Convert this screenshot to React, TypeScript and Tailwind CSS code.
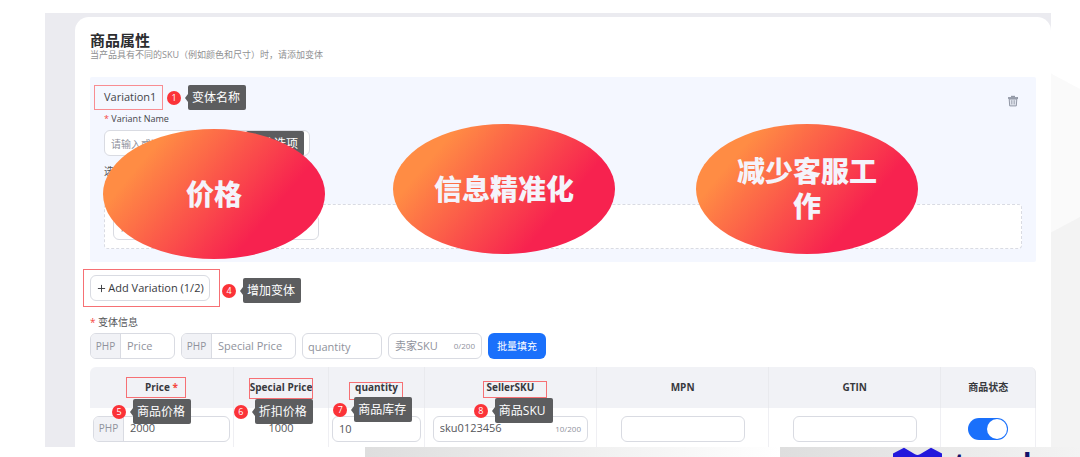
import type { ReactNode } from "react";
import { Plus } from "lucide-react";

const field =
  "h-[26px] rounded-md border border-[#d9dbe2] bg-white text-[11px] text-[#55565a] placeholder:text-[#8f929c] outline-none";

function Note({ n, text, className = "" }: { n?: number; text: string; className?: string }) {
  return (
    <div className={`absolute z-10 flex items-center gap-[7px] ${className}`}>
      {n !== undefined && (
        <span className="flex size-[14px] items-center justify-center rounded-full bg-[#fb3338] text-[9px] leading-none text-white">
          {n}
        </span>
      )}
      <span className="relative flex h-[25px] w-[58px] items-center whitespace-nowrap rounded-xs bg-[#5c5d5f] pl-1 text-xs text-white">
        {n !== undefined && (
          <span className="absolute -left-[3px] top-1/2 size-0 -translate-y-1/2 border-y-[4px] border-r-[3px] border-y-transparent border-r-[#5c5d5f]" />
        )}
        {text}
      </span>
    </div>
  );
}

function PrefixInput({ label, placeholder, value, className }: { label: string; placeholder?: string; value?: string; className: string }) {
  return (
    <label className={`flex overflow-hidden ${field} ${className}`}>
      <span className="flex w-[30px] shrink-0 items-center justify-center border-r border-[#d9dbe2] bg-[#f1f2f6] text-[10px] text-[#8f929c]">
        PHP
      </span>
      <input aria-label={label} placeholder={placeholder} defaultValue={value} className="w-full min-w-0 px-1.5 outline-none placeholder:text-[#8f929c]" />
    </label>
  );
}

function CountInput({ label, placeholder, value, count, className }: { label: string; placeholder?: string; value?: string; count: string; className: string }) {
  return (
    <label className={`flex items-center px-1.5 ${field} ${className}`}>
      <input aria-label={label} placeholder={placeholder} defaultValue={value} className="w-full min-w-0 outline-none placeholder:text-[#8f929c]" />
      <span className="shrink-0 text-[8px] text-[#8f929c]">{count}</span>
    </label>
  );
}

function Bubble({ children, className }: { children: ReactNode; className: string }) {
  return (
    <div
      className={`absolute z-20 flex h-[130px] w-[222px] items-center justify-center rounded-[50%] bg-[linear-gradient(130deg,#ff8c44_20%,#f7224f_72%)] px-[38px] text-center text-[28px] font-black leading-[35px] text-[#f4f3fb] ${className}`}
    >
      {children}
    </div>
  );
}

function Trash() {
  return (
    <svg viewBox="0 0 10 12" className="h-3 w-[10px]" fill="none" stroke="#9298a6">
      <path d="M1.2 4h7.6l-.5 6.9H1.7z" fill="#e3e7f0" />
      <path d="M0 3h10" strokeWidth="1.8" />
      <path d="M3 1.5h4" strokeWidth="1.4" />
      <path d="M3.8 5.2v4.2M6.2 5.2v4.2" strokeWidth=".9" />
    </svg>
  );
}

function Th({ text, box, required, children }: { text: string; box?: string; required?: boolean; children?: ReactNode }) {
  return (
    <th className="relative border-r border-[#e9eaee] p-0 text-[10px] font-bold text-[#38393d]">
      {box && <span className={`absolute border border-[#f67074] ${box}`} />}
      {text}
      {required && <span className="text-[#f5473f]"> *</span>}
      {children}
    </th>
  );
}

export default function App() {
  return (
    <div className="relative h-screen overflow-hidden bg-white pt-[13px] font-['Open_Sans','Noto_Sans_CJK_SC',sans-serif]">
      <svg className="absolute right-0 top-0 h-full w-[30px]" viewBox="0 0 30 457" preserveAspectRatio="none">
        <path d="M0 73L30 89V457H0z" fill="#fafafa" />
        <path d="M0 233L30 217V457H0z" fill="#f3f3f3" />
      </svg>

      <main className="relative ml-[45px] mr-[29px] h-[434px] overflow-hidden bg-[#ebebf0] pl-[30px] pt-1">
        <section className="h-full rounded-t-[14px] bg-white px-[15px] pt-[14px]">
          <h1 className="text-[15px] font-bold leading-[18px] text-[#2c2d2f]">商品属性</h1>
          <p className="text-[9px] leading-3 text-[#8f9092]">当产品具有不同的SKU（例如颜色和尺寸）时，请添加变体</p>

          <div className="relative mt-4 h-[185px] rounded-xs bg-[#f4f7ff] px-[14px] pt-2">
            <div className="flex items-center justify-between">
              <h2 className="relative -ml-[10px] flex h-[25px] w-[69px] items-center border border-[#f88d92] pl-[9px] text-[11px] text-[#444549]">
                Variation1
                <Note n={1} text="变体名称" className="left-[72px]" />
              </h2>
              <button aria-label="Delete variation" className="mr-1 mt-[6px]"><Trash /></button>
            </div>
            <label htmlFor="variant" className="mt-[3px] block text-[9px] leading-3 text-[#444549]">
              <span className="text-[#f5473f]">* </span>Variant Name
            </label>
            <div className="relative mt-[5px] w-[206px]">
              <input id="variant" placeholder="请输入或选择" className={`block w-full px-1.5 ${field} placeholder:text-[10px]`} />
              <Note text="变体选项" className="right-[6px] top-px" />
            </div>
            <p className="mt-[9px] text-[10px] leading-3 text-[#55565a]">选项</p>
            <div className="mt-[27px] flex h-[45px] items-center rounded border border-dashed border-[#d9dbe3] bg-white px-2">
              <input aria-label="Option" placeholder="请输入" className={`w-[206px] px-1.5 ${field} placeholder:text-[10px]`} />
            </div>
            <Bubble className="left-[13px] top-[52px]">价格</Bubble>
            <Bubble className="left-[303px] top-[47px]">信息精准化</Bubble>
            <Bubble className="left-[606px] top-[47px]">减少客服工作</Bubble>
          </div>

          <div className="relative -ml-[7px] mt-[7px] flex h-[38px] w-[137px] items-center border border-[#f67074] pl-[6px]">
            <button className="flex h-[26px] w-[120px] items-center justify-center gap-px rounded-md border border-[#d9dbe2] text-[11px] text-[#38393d]">
              <Plus size={11} />
              Add Variation (1/2)
            </button>
            <Note n={4} text="增加变体" className="left-[138px] top-[8px]" />
          </div>

          <p className="mt-[9px] text-[10px] leading-3 text-[#55565a]">
            <span className="text-[#f5473f]">* </span>变体信息
          </p>
          <div className="mt-[5px] flex gap-1.5">
            <PrefixInput label="Price" placeholder="Price" className="w-[85px]" />
            <PrefixInput label="Special Price" placeholder="Special Price" className="w-[115px]" />
            <input aria-label="quantity" placeholder="quantity" className={`w-[80px] px-[5px] ${field}`} />
            <CountInput label="卖家SKU" placeholder="卖家SKU" count="0/200" className="w-[94px]" />
            <button className="h-[26px] w-[58px] rounded-md bg-[#1a70fb] text-[10px] text-white">批量填充</button>
          </div>

          <table className="mt-2 w-full table-fixed border-separate border-spacing-0">
            <colgroup>
              <col className="w-[15.2%]" />
              <col className="w-[10.1%]" />
              <col className="w-[10.1%]" />
              <col className="w-[18.2%]" />
              <col className="w-[18.2%]" />
              <col className="w-[18.2%]" />
              <col className="w-[10%]" />
            </colgroup>
            <thead>
              <tr className="h-[41px] bg-[#f1f2f6] *:first:rounded-tl-md *:last:rounded-tr-md">
                <Th text="Price" required box="left-[36px] top-[10px] h-[21px] w-[60px]">
                  <Note n={5} text="商品价格" className="left-[22px] top-[32px] font-normal" />
                </Th>
                <Th text="Special Price" box="left-[15px] top-[11px] h-[21px] w-[64px]">
                  <Note n={6} text="折扣价格" className="left-0 top-[32px] font-normal" />
                </Th>
                <Th text="quantity" box="left-[20px] top-[15px] h-[18px] w-[54px]">
                  <Note n={7} text="商品库存" className="left-[4px] top-[30px] font-normal" />
                </Th>
                <Th text="SellerSKU" box="left-[58px] top-[14px] h-[17px] w-[64px]">
                  <Note n={8} text="商品SKU" className="left-[49px] top-[31px] font-normal" />
                </Th>
                <Th text="MPN" />
                <Th text="GTIN" />
                <Th text="商品状态" />
              </tr>
            </thead>
            <tbody>
              <tr className="h-[41px] text-center text-[11px] text-[#55565a] *:border-r *:border-[#efeff3] *:p-0">
                <td><PrefixInput label="Price value" value="2000" className="mx-[3px]" /></td>
                <td>1000</td>
                <td><input aria-label="Quantity value" defaultValue="10" className={`mx-auto block w-[89px] px-1.5 ${field}`} /></td>
                <td><CountInput label="SellerSKU value" value="sku0123456" count="10/200" className="mx-2" /></td>
                <td><input aria-label="MPN" className={`mx-auto block w-[124px] ${field}`} /></td>
                <td><input aria-label="GTIN" className={`mx-auto block w-[124px] ${field}`} /></td>
                <td>
                  <input
                    type="checkbox"
                    role="switch"
                    aria-label="商品状态"
                    defaultChecked
                    className="mx-auto block h-[22px] w-10 appearance-none rounded-full bg-[#1a70fb] p-px before:ml-auto before:block before:size-5 before:rounded-full before:bg-white"
                  />
                </td>
              </tr>
            </tbody>
          </table>
        </section>
      </main>

      <footer className="relative flex h-[10px]">
        <div className="w-[365px] bg-white" />
        <div className="w-[415px] bg-linear-to-r from-[#dedede] to-white" />
        <div className="flex-1 bg-linear-to-r from-[#dedede] to-[#f3f3f3]" />
        <div className="absolute right-0 top-0 flex h-[10px] w-[187px] overflow-hidden">
          <svg viewBox="0 0 49 10" className="h-[10px] w-[49px] shrink-0">
            <path d="M0 6.5L11 .8L22 7.2Q24.5 8.6 27 7.2L38 .8L49 6.5V10H0z" fill="#2218dc" />
          </svg>
          <span className="ml-3 mt-[2px] text-[28px] font-bold leading-7 text-[#13126b]">trend</span>
        </div>
      </footer>
    </div>
  );
}
